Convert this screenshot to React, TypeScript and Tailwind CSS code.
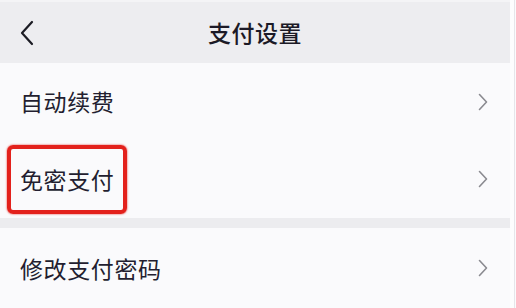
import React from "react";

const font = { fontFamily: '"Noto Sans CJK SC", "Noto Sans", sans-serif' };

function Chevron() {
  return (
    <svg width="10" height="18" viewBox="0 0 10 18" fill="none" className="shrink-0">
      <path d="M1.5 1.5 L8.5 9 L1.5 16.5" stroke="#8a8a90" strokeWidth="1.6" strokeLinecap="round" strokeLinejoin="round" />
    </svg>
  );
}

export default function App() {
  return (
    <div className="w-[516px] h-[308px] flex bg-[#fbfbfd] overflow-hidden" style={font}>
      <div className="w-[510px] flex flex-col">
        <div className="h-[63px] bg-[#ededf0] border-t-2 border-[#f4f4f6] flex items-center relative">
          <svg width="16" height="26" viewBox="0 0 16 26" fill="none" className="ml-[19px]">
            <path d="M13 2 L3 13 L13 24" stroke="#1c1c24" strokeWidth="2.2" strokeLinecap="round" strokeLinejoin="round" />
          </svg>
          <div className="absolute inset-0 flex items-center justify-center">
            <span className="text-[23px] font-medium text-[#1c1a26] tracking-[0.5px]">支付设置</span>
          </div>
        </div>
        <div className="h-[77px] bg-[#fafafc] flex items-center justify-between pl-[20px] pr-[22px]">
          <span className="text-[23px] tracking-[0.6px] text-[#231e30]">自动续费</span>
          <Chevron />
        </div>
        <div className="h-[78px] bg-[#fafafc] flex items-center justify-between pl-[7px] pr-[22px]">
          <div className="h-[69px] w-[120px] border-4 border-[#e3211c] rounded-[6px] flex items-center pl-[9px] shadow-[0_0_2px_#e3211c]">
            <span className="text-[23px] tracking-[0.6px] text-[#231e30]">免密支付</span>
          </div>
          <Chevron />
        </div>
        <div className="h-[10px] bg-[#ececef]" />
        <div className="flex-1 bg-[#fafafc] flex items-center justify-between pl-[20px] pr-[22px]">
          <span className="text-[23px] tracking-[0.6px] text-[#231e30]">修改支付密码</span>
          <Chevron />
        </div>
      </div>
      <div className="w-[6px] flex">
        <div className="w-[4px] bg-[#fdfdfe]" />
        <div className="w-[1px] bg-[#e6e6ea]" />
      </div>
    </div>
  );
}
